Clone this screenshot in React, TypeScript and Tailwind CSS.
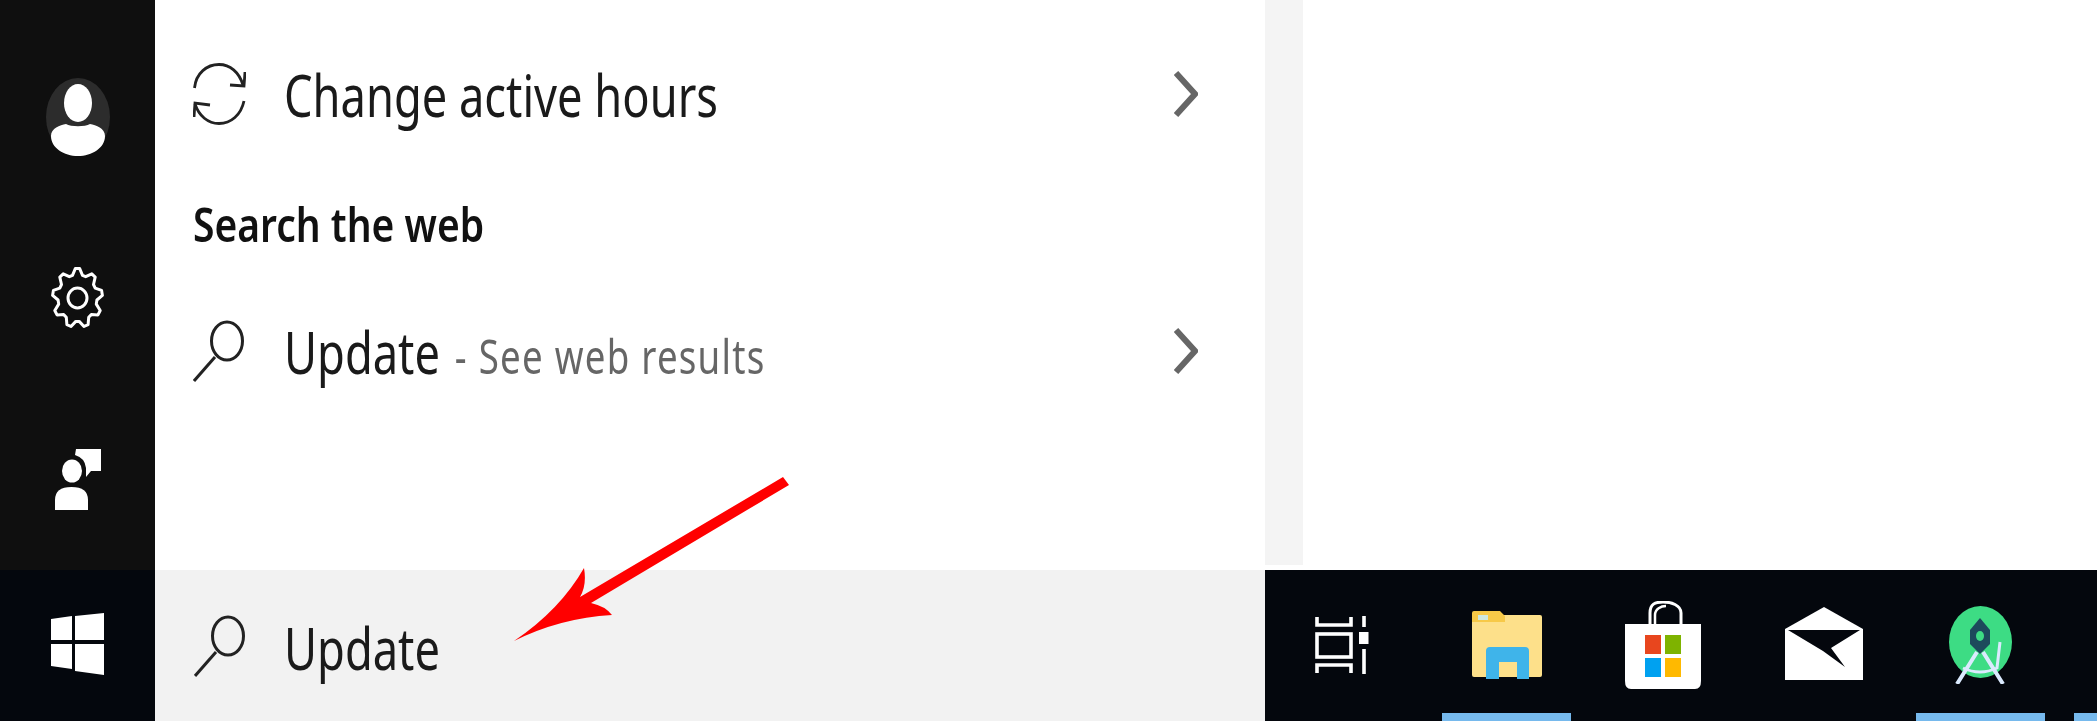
const GEAR_TEETH = 9;

function gearPoints() {
  const pts: string[] = [];
  const steps = GEAR_TEETH * 4;
  for (let i = 0; i < steps; i++) {
    const a = (i / steps) * Math.PI * 2 - Math.PI / 2 - Math.PI / steps;
    const outer = i % 4 === 0 || i % 4 === 1;
    const rx = outer ? 25 : 19.5;
    const ry = outer ? 29.5 : 23.5;
    pts.push(`${(26.5 + rx * Math.cos(a)).toFixed(1)},${(31 + ry * Math.sin(a)).toFixed(1)}`);
  }
  return pts.join(" ");
}

function UserIcon() {
  return (
    <svg className="blur-[0.7px]" width="64" height="78" viewBox="0 0 64 78">
      <ellipse cx="32" cy="39" rx="32" ry="39" fill="#2c2c2c" />
      <ellipse cx="32" cy="25" rx="14" ry="19" fill="#fff" />
      <path d="M5 58 C5 50 14 47 20 46 C25 49 39 49 44 46 C50 47 59 50 59 58 C59 70 46 78 32 78 C18 78 5 70 5 58Z" fill="#fff" />
    </svg>
  );
}

function GearIcon() {
  return (
    <svg className="blur-[0.7px]" width="53" height="62" viewBox="0 0 53 62" fill="none" stroke="#fff" strokeWidth="3" strokeLinejoin="round">
      <polygon points={gearPoints()} />
      <ellipse cx="26.5" cy="31" rx="9.5" ry="10" />
    </svg>
  );
}

function FeedbackIcon() {
  return (
    <svg className="blur-[0.7px]" width="46" height="62" viewBox="0 0 46 62" fill="#fff">
      <ellipse cx="17" cy="23" rx="10" ry="11.5" />
      <path d="M0 62V52Q0 39 16.5 39Q33 39 33 52V62Z" />
      <path d="M21 1H46V23H36L31 29V20Q30 10 20 7Z" />
    </svg>
  );
}

function WindowsIcon() {
  return (
    <svg className="blur-[0.7px]" width="53" height="62" viewBox="0 0 53 62" fill="#fff">
      <path d="M0 6L21 3V27H0Z" />
      <path d="M24 3L53 0V27H24Z" />
      <path d="M0 31H21V56L0 53Z" />
      <path d="M24 31H53V62L24 58Z" />
    </svg>
  );
}

function RefreshIcon() {
  return (
    <svg width="53" height="62" viewBox="0 0 53 62" fill="none" stroke="#222" strokeWidth="2.8">
      <path d="M1.5 25C3 10 14 1.5 26 1.5C37 1.5 46 9 50 22" />
      <path d="M52 9L51 23L37 22" />
      <path d="M51 38C48 52 38 60.5 26 60.5C15 60.5 6 53 2 41" />
      <path d="M1 54L2 40L17 42" />
    </svg>
  );
}

function SearchIcon() {
  return (
    <svg width="52" height="62" viewBox="0 0 52 62" fill="none" stroke="#222" strokeWidth="3">
      <ellipse cx="34" cy="21" rx="15.5" ry="19" />
      <path d="M22 37L1 61" />
    </svg>
  );
}

function Chevron() {
  return (
    <svg width="24" height="46" viewBox="0 0 24 46" fill="none" stroke="#666" strokeWidth="6">
      <path d="M2 2L21 23L2 44" />
    </svg>
  );
}

function TaskViewIcon() {
  return (
    <svg className="blur-[0.7px]" width="54" height="60" viewBox="0 0 54 60" fill="none" stroke="#fff" strokeWidth="3.6">
      <path d="M2 2V10H36V2" />
      <rect x="2" y="19" width="34" height="23" />
      <path d="M2 58V50H36V58" />
      <path d="M49 1V12M49 34V59" />
      <rect x="44" y="17" width="9.5" height="12" fill="#fff" stroke="none" />
    </svg>
  );
}

function FolderIcon() {
  return (
    <svg className="blur-[0.7px]" width="70" height="68" viewBox="0 0 70 68">
      <rect x="0" y="4" width="70" height="62" rx="2" fill="#fde08a" />
      <path d="M0 12V2Q0 0 2 0H28L33 5V11H0Z" fill="#f7c948" />
      <rect x="6" y="4" width="10" height="5" fill="#cfe8e0" />
      <path d="M14 68V40Q14 36 18 36H53Q57 36 57 40V68H45V51H27V68Z" fill="#3fb4ea" />
    </svg>
  );
}

function StoreIcon() {
  return (
    <svg className="blur-[0.7px]" width="76" height="88" viewBox="0 0 76 88">
      <path d="M25 24V12C25 3 30 1 38 1C46 1 56 4 56 12V24" fill="none" stroke="#fff" strokeWidth="3" />
      <path d="M30 24V14C30 8 36 5 41 5" fill="none" stroke="#fff" strokeWidth="2.5" />
      <path d="M0 23H76V80Q76 88 70 88H6Q0 88 0 80Z" fill="#fff" />
      <rect x="20" y="34" width="16" height="19" fill="#e8461e" />
      <rect x="40" y="34" width="16" height="19" fill="#7eb300" />
      <rect x="20" y="57" width="16" height="19" fill="#00a1f0" />
      <rect x="40" y="57" width="16" height="19" fill="#ffb900" />
    </svg>
  );
}

function MailIcon() {
  return (
    <svg className="blur-[0.7px]" width="78" height="73" viewBox="0 0 78 73">
      <path d="M39 0L78 22V73H0V22Z" fill="#fff" />
      <path d="M3 23H75L46 41L60 60L38 44Z" fill="#04070d" />
    </svg>
  );
}

function AndroidIcon() {
  return (
    <svg className="blur-[0.7px]" width="63" height="78" viewBox="0 0 63 78">
      <ellipse cx="31.5" cy="36" rx="31.5" ry="36" fill="#3ddc84" />
      <path d="M31 12L41 24V38L31 48L21 38V24Z" fill="#1d4a5c" />
      <ellipse cx="31" cy="30" rx="4" ry="5" fill="#3ddc84" />
      <path d="M28 46L8 78M34 46L54 78" stroke="#dbeafe" strokeWidth="4" fill="none" />
      <path d="M14 62Q31 70 48 62L51 36" stroke="#dbeafe" strokeWidth="3" fill="none" />
    </svg>
  );
}

function Arrow() {
  return (
    <svg className="absolute left-[505px] top-[470px]" width="295" height="180" viewBox="505 470 295 180">
      <path d="M783 477L789 485L591 603Q605 606 612 615Q560 618 514 641Q560 610 584 568Q587 585 580 597Z" fill="#ff0000" />
    </svg>
  );
}

export default function App() {
  const text = "origin-left scale-x-[0.78] whitespace-nowrap font-['Noto_Sans',sans-serif]";

  return (
    <div className="relative flex h-[721px] w-[2097px] flex-col overflow-hidden bg-white">
      <div className="flex h-[570px]">
        {/* left rail */}
        <div className="flex w-[155px] shrink-0 flex-col items-center bg-[#0f0f0f] pt-[78px]">
          <UserIcon />
          <div className="mt-[111px]"><GearIcon /></div>
          <div className="mt-[119px]"><FeedbackIcon /></div>
        </div>

        {/* results */}
        <div className="flex w-[1110px] shrink-0 flex-col pt-[47px] pl-[38px] pr-[67px] text-[#1a1a1a] blur-[0.6px]">
          <div className="flex h-[94px] items-center">
            <RefreshIcon />
            <div className={`ml-[38px] pt-[2px] text-[58px] leading-none ${text}`}>Change active hours</div>
            <div className="ml-auto"><Chevron /></div>
          </div>
          <div className="mt-[48px] flex h-[70px] origin-left scale-x-[0.83] items-center whitespace-nowrap font-['Noto_Sans',sans-serif] text-[47px] font-semibold leading-none text-[#111]">
            Search the web
          </div>
          <div className="mt-[45px] flex h-[94px] items-center">
            <SearchIcon />
            <div className={`ml-[39px] pt-[2px] text-[58px] leading-none ${text}`}>
              Update <span className="ml-[4px] text-[47px] tracking-[1.6px] text-[#666]">- See web results</span>
            </div>
            <div className="ml-auto"><Chevron /></div>
          </div>
        </div>

        {/* preview */}
        <div className="h-[565px] w-[38px] bg-[#f4f4f4]" />
        <div className="flex-1 bg-white" />
      </div>

      <div className="flex h-[151px]">
        <div className="flex w-[155px] shrink-0 items-center justify-center bg-[#04070d] pb-[3px]">
          <WindowsIcon />
        </div>
        <div className="flex w-[1110px] shrink-0 items-center bg-[#f2f2f2] pl-[39px] text-[#1a1a1a] blur-[0.6px]">
          <SearchIcon />
          <div className={`ml-[38px] pt-[5px] text-[58px] leading-none ${text}`}>Update</div>
        </div>
        <div className="flex flex-1 bg-[#04070d]">
          <div className="flex w-[154px] shrink-0 items-center justify-center pb-[1px]"><TaskViewIcon /></div>
          <div className="ml-[23px] flex w-[129px] shrink-0 items-center justify-center border-b-[8px] border-[#76b9ed] pt-[6px]"><FolderIcon /></div>
          <div className="ml-[27px] flex w-[129px] shrink-0 items-center justify-center border-b-[8px] border-transparent pt-[6px]"><StoreIcon /></div>
          <div className="ml-[32px] flex w-[129px] shrink-0 items-center justify-center border-b-[8px] border-transparent pt-[4px]"><MailIcon /></div>
          <div className="ml-[28px] flex w-[129px] shrink-0 items-center justify-center border-b-[8px] border-[#76b9ed] pt-[6px]"><AndroidIcon /></div>
          <div className="ml-[29px] flex-1 border-b-[8px] border-[#76b9ed]" />
        </div>
      </div>

      <Arrow />
    </div>
  );
}
